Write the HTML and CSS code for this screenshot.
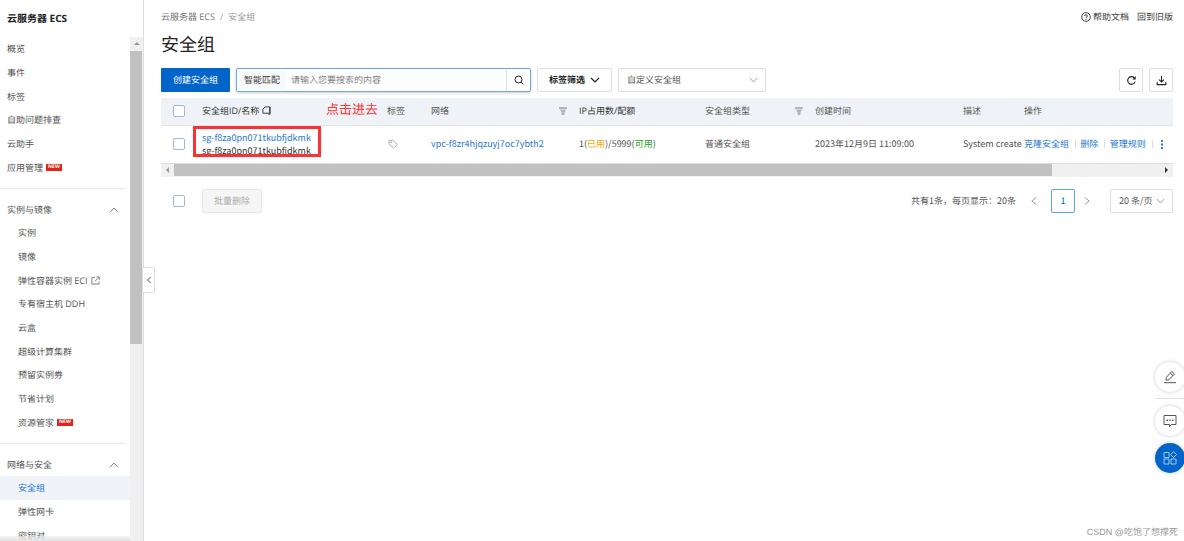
FILE: index.html
```html
<!DOCTYPE html>
<html lang="zh-CN">
<head>
<meta charset="utf-8">
<title>云服务器 ECS - 安全组</title>
<link rel="stylesheet" href="styles.css">
</head>
<body>
<div class="app">
  <aside class="sidebar">
    <h2 class="product">云服务器 ECS</h2>
    <div class="nav-wrap">
      <nav class="nav">
        <ul class="list list-top">
          <li><a href="#">概览</a></li>
          <li><a href="#">事件</a></li>
          <li><a href="#">标签</a></li>
          <li><a href="#">自助问题排查</a></li>
          <li><a href="#">云助手</a></li>
          <li><a href="#">应用管理<span class="new">NEW</span></a></li>
        </ul>
        <button class="group" type="button">实例与镜像<svg class="caret" viewBox="0 0 10 6"><path d="M1 5.2 5 1l4 4.2"/></svg></button>
        <ul class="list list-sub list-instances">
          <li><a href="#">实例</a></li>
          <li><a href="#">镜像</a></li>
          <li><a href="#">弹性容器实例 ECI<svg class="ext" viewBox="0 0 10 10"><path d="M4.500 1.500H1v7.500h8V6M6 1h3.200v3.200M9 1.200 4.500 5.700"/></svg></a></li>
          <li><a href="#">专有宿主机 DDH</a></li>
          <li><a href="#">云盒</a></li>
          <li><a href="#">超级计算集群</a></li>
          <li><a href="#">预留实例券</a></li>
          <li><a href="#">节省计划</a></li>
          <li><a href="#">资源管家<span class="new">NEW</span></a></li>
        </ul>
        <button class="group" type="button">网络与安全<svg class="caret" viewBox="0 0 10 6"><path d="M1 5.2 5 1l4 4.2"/></svg></button>
        <ul class="list list-sub">
          <li class="active"><a href="#">安全组</a></li>
          <li><a href="#">弹性网卡</a></li>
          <li><a href="#">密钥对</a></li>
        </ul>
      </nav>
      <div class="vbar"><span class="up"></span><span class="vthumb"></span></div>
    </div>
    <button class="collapse" type="button" aria-label="收起"><svg viewBox="0 0 6 10"><path d="M4.500 2 1.500 5l3 3"/></svg></button>
  </aside>

  <main class="main">
    <div class="top">
      <div class="crumbs"><a href="#">云服务器 ECS</a><span>/</span><span>安全组</span></div>
      <div class="help">
        <a href="#"><svg viewBox="0 0 10 10"><circle cx="5" cy="5" r="4.300"/><path d="M3.600 4c0-1.800 2.800-1.800 2.800 0C6.400 5 5 4.900 5 6M5 6.900v.9"/></svg>帮助文档</a>
        <a href="#">回到旧版</a>
      </div>
    </div>
    <h1 class="title">安全组</h1>

    <div class="toolbar">
      <button class="primary" type="button">创建安全组</button>
      <div class="search">
        <button class="match" type="button">智能匹配</button>
        <input type="text" aria-label="搜索" placeholder="请输入您要搜索的内容">
        <button class="go" type="button" aria-label="搜索"><svg viewBox="0 0 10 10"><circle cx="4.500" cy="4.500" r="3.500"/><path d="M7 7l2.300 2.300"/></svg></button>
      </div>
      <button class="box tagfilter" type="button">标签筛选<svg viewBox="0 0 10 6"><path d="M1 1l4 4 4-4"/></svg></button>
      <div class="select kind">
        <select aria-label="安全组类型"><option>自定义安全组</option></select>
        <svg viewBox="0 0 10 6"><path d="M1 .8 5 5.200 9 .8"/></svg>
      </div>
      <div class="tools">
        <button class="box icon" type="button" aria-label="刷新"><svg viewBox="0 0 12 12"><path d="M10 7.300A4.200 4.200 0 1 1 9.500 3.600"/><path class="solid" d="M10.600 1.200v3.600H7z"/></svg></button>
        <button class="box icon" type="button" aria-label="下载"><svg viewBox="0 0 12 12"><path d="M6 1v6.500M3.300 5 6 7.700 8.700 5M1.300 7.500v3h9.400v-3"/></svg></button>
      </div>
    </div>

    <div class="table-wrap">
      <table class="table">
        <colgroup><col class="c-check"><col class="c-id"><col class="c-tag"><col class="c-net"><col class="c-ip"><col class="c-type"><col class="c-time"><col class="c-desc"><col class="c-ops"></colgroup>
        <thead>
          <tr>
            <th class="check"><input type="checkbox" aria-label="全选"></th>
            <th><span class="dark">安全组ID/名称</span><svg class="copy" viewBox="0 0 10 10"><path d="M3.500 1H8.500v7H1V3.500z"/><path d="M9 1v8.200H7"/></svg></th>
            <th>标签</th>
            <th><div class="head">网络<svg class="funnel" viewBox="0 0 8 8"><path d="M0 0h8v2H0zM1 2.500h6L5.800 5H2.200zM2.500 5h3v3h-3z"/></svg></div></th>
            <th><span class="dark">IP占用数/配额</span></th>
            <th><div class="head">安全组类型<svg class="funnel" viewBox="0 0 8 8"><path d="M0 0h8v2H0zM1 2.500h6L5.800 5H2.200zM2.500 5h3v3h-3z"/></svg></div></th>
            <th>创建时间</th>
            <th>描述</th>
            <th>操作</th>
          </tr>
        </thead>
        <tbody>
          <tr>
            <td class="check"><input type="checkbox" aria-label="选择 sg-f8za0pn071tkubfjdkmk"></td>
            <td class="id-cell"><div class="ident"><a href="#">sg-f8za0pn071tkubfjdkmk</a><span>sg-f8za0pn071tkubfjdkmk</span></div></td>
            <td><svg class="tag" viewBox="0 0 10 10"><path d="M1 1.200h3.800L9.300 5.500 5.600 9.200 1 4.700z"/><circle cx="3.200" cy="3.300" r=".6"/></svg></td>
            <td><a href="#">vpc-f8zr4hjqzuyj7oc7ybth2</a></td>
            <td>1(<span class="used">已用</span>)/5999(<span class="free">可用</span>)</td>
            <td>普通安全组</td>
            <td>2023年12月9日 11:09:00</td>
            <td class="desc">System create</td>
            <td><div class="ops"><a href="#">克隆安全组</a><i></i><a href="#">删除</a><i></i><a href="#">管理规则</a><i></i><button type="button" aria-label="更多"><svg viewBox="0 0 2 10"><path d="M0 0h2v2H0zM0 4h2v2H0zM0 8h2v2H0z"/></svg></button></div></td>
          </tr>
        </tbody>
      </table>
      <div class="hbar"><span class="left"></span><span class="hthumb"></span><span class="right"></span></div>
      <div class="mark-box"></div>
      <div class="mark-text">点击进去</div>
    </div>

    <div class="footer">
      <input type="checkbox" aria-label="全选本页">
      <button class="bulk" type="button" disabled>批量删除</button>
      <div class="pager">
        <span>共有1条，每页显示：20条</span>
        <button class="step" type="button" aria-label="上一页"><svg viewBox="0 0 6 10"><path d="M5.200 1.500.8 5l4.400 3.500"/></svg></button>
        <button class="page" type="button">1</button>
        <button class="step" type="button" aria-label="下一页"><svg viewBox="0 0 6 10"><path d="M.8 1.500 5.200 5 .8 8.500"/></svg></button>
        <div class="select size">
          <select aria-label="每页条数"><option>20 条/页</option></select>
          <svg viewBox="0 0 10 6"><path d="M1 .8 5 5.200 9 .8"/></svg>
        </div>
      </div>
    </div>
  </main>

  <div class="float">
    <button type="button" aria-label="反馈"><svg viewBox="0 0 14 14"><path d="M1 12.700h12M3 10.200l.4-2.900L8.800 1.500l2.700 2.400-5.600 5.900zM7.300 3.100 10 5.600"/></svg></button>
    <span class="rule"></span>
    <button type="button" aria-label="咨询"><svg viewBox="0 0 14 14"><path d="M1 1.500h12v9H8.500L6.500 12.500v-2H1z"/><path class="dots" d="M3.500 5.500h1.400v1.400H3.500zM6.300 5.500h1.400v1.400H6.300zM9.100 5.500h1.400v1.400H9.100z"/></svg></button>
    <button class="blue" type="button" aria-label="应用"><svg viewBox="0 0 14 14"><path d="M1 1.500h5v5H1zM1 8h5v5H1zM8 8h5v5H8zM10.500.6l3 3-3 3-3-3z"/></svg></button>
  </div>
  <div class="watermark">CSDN @吃饱了想撑死</div>
</div>
</body>
</html>
```
FILE: styles.css
```css
* { box-sizing: border-box; }
body {
  margin: 0;
  font: 9px/14px "Open Sans", "Noto Sans CJK SC", sans-serif;
  text-rendering: geometricPrecision;
  color: #555;
  background: #fff;
}
a { color: #1f78d1; text-decoration: none; }
button, input, select { font: inherit; color: inherit; margin: 0; text-rendering: inherit; }
button { padding: 0; border: 0; background: none; }
svg { fill: none; stroke: currentColor; flex: none; }
ul { list-style: none; margin: 0; padding: 0; }

.app { position: relative; display: flex; height: 100vh; overflow: hidden; }

.sidebar {
  position: relative;
  display: flex;
  flex-direction: column;
  flex: none;
  width: 144px;
  border-right: 1px solid #dcdfe2;
}
.product { margin: 0; padding: 11px 7px 12px; font-size: 10px; line-height: 14px; color: #222; }
.nav-wrap { position: relative; display: flex; flex: 1; min-height: 0; }
.nav-wrap::after {
  content: "";
  position: absolute;
  left: 0; right: 13px; bottom: 0;
  height: 5px;
  background: linear-gradient(#eeeeee99, #e2e2e2);
}
.nav { flex: 1; overflow: hidden; }
.list { display: grid; grid-auto-rows: 1fr; height: 71px; }
.list-top { height: 142px; }
.list-instances { height: 213px; }
.list a { display: flex; align-items: center; height: 100%; padding: 1px 0 0 7px; color: #555; }
.list-sub a { padding-left: 18px; }
.list .active { background: #eff3f8; }
.list .active a { color: #1f78d1; }
.new {
  margin-left: 3px;
  padding: 0 2px;
  background: #e1251b;
  color: #fff;
  font-size: 5px;
  line-height: 7px;
  font-weight: bold;
}
.ext { width: 9px; height: 9px; margin-left: 3px; stroke: #777; }
.group {
  display: flex;
  align-items: center;
  justify-content: space-between;
  position: relative;
  width: 100%;
  height: 42px;
  padding: 19px 11px 0 7px;
}
.group::before {
  content: "";
  position: absolute;
  left: 0; right: 5px; top: 9px;
  height: 1px;
  background: #e6e8eb;
}
.caret { width: 10px; height: 6px; stroke: #888; }
.vbar { display: flex; flex-direction: column; width: 13px; background: #f0f0f0; }
.up { height: 14px; }
.up::before {
  content: "";
  display: block;
  width: 0;
  margin: 5px auto 0;
  border: 3px solid transparent;
  border-top: 0;
  border-bottom-color: #999;
}
.vthumb { height: 60%; margin-right: 1px; background: #c1c1c1; max-height: 293px; }
.collapse {
  position: absolute;
  left: 142px; top: 267px;
  display: grid;
  place-items: center;
  width: 13px; height: 26px;
  border: 1px solid #dbe0e8;
  border-radius: 0 2px 2px 0;
  background: #fff;
}
.collapse svg { width: 6px; height: 10px; stroke: #3c4c6b; }

.main { flex: 1; min-width: 0; padding: 10px 11px 0 17px; }
.top { display: flex; justify-content: space-between; }
.crumbs { display: flex; gap: 5px; color: #999; }
.crumbs a { color: #777; }
.help { display: flex; gap: 8px; }
.help a { display: flex; align-items: center; gap: 2px; color: #444; }
.help svg { width: 10px; height: 10px; }
.title { margin: 9px 0 11px; font-size: 18px; line-height: 24px; font-weight: normal; color: #222; }

.toolbar { display: flex; gap: 6px; height: 24px; }
.primary { width: 69px; background: #0064c8; color: #fff; border-radius: 1px; }
.search {
  display: flex;
  width: 295px;
  border: 1px solid #6aa9e6;
  border-radius: 2px;
  box-shadow: 0 1px 3px #0003;
}
.match { margin: 2px 0 2px 2px; padding: 0 5px; background: #f7f9fa; color: #444; }
.search input { flex: 1; min-width: 0; padding: 0 6px; border: 0; outline: 0; background: none; }
.search input::placeholder { color: #808080; }
.go { display: grid; place-items: center; width: 24px; border-left: 1px solid #dde2e8; color: #222; }
.go svg { width: 10px; height: 10px; }
.box { border: 1px solid #dcdfe3; border-radius: 2px; color: #222; background: #fff; }
.tagfilter { display: flex; align-items: center; justify-content: center; gap: 5px; width: 75px; font-weight: bold; }
.tagfilter svg { width: 10px; height: 6px; stroke-width: 1.2; }
.select { position: relative; height: 24px; }
.select select {
  appearance: none;
  width: 100%; height: 100%;
  padding: 0 8px;
  border: 1px solid #dcdfe3;
  border-radius: 2px;
  background: #fff;
}
.select svg { position: absolute; right: 8px; top: 9px; width: 9px; height: 6px; stroke: #999; pointer-events: none; }
.kind { width: 148px; }
.tools { display: flex; gap: 6px; margin-left: auto; }
.icon { display: grid; place-items: center; width: 24px; }
.icon svg { width: 11px; height: 11px; stroke-width: 1.2; }
.icon .solid { fill: currentColor; stroke: none; }

.table-wrap { position: relative; margin-top: 6px; }
.table { width: 100%; table-layout: fixed; border-collapse: collapse; }
.table tbody, .pager { font-family: "Noto Sans CJK SC", sans-serif; }
.c-check { width: 33px; }
.c-id { width: 185px; }
.c-tag { width: 44px; }
.c-net { width: 148px; }
.c-ip { width: 126px; }
.c-type { width: 110px; }
.c-time { width: 148px; }
.c-desc { width: 63px; }
th, td { padding: 0 8px; text-align: left; white-space: nowrap; vertical-align: middle; }
th { height: 27px; background: #eff3f8; border-bottom: 1px solid #e3e6ea; font-weight: normal; }
td { height: 38px; border-bottom: 1px solid #dedede; }
td:last-child, th:last-child { padding: 0 6px; }
.check { padding: 0 12px; line-height: 0; }
input[type="checkbox"] {
  appearance: none;
  flex: none;
  width: 12px; height: 12px;
  border: 1px solid #a3b8d0;
  border-radius: 2px;
  background: #fff;
}
.dark { color: #333; }
.copy { width: 9px; height: 9px; margin-left: 3px; vertical-align: -1px; color: #333; }
.head { display: flex; align-items: center; justify-content: space-between; margin-right: -4px; }
.funnel { width: 8px; height: 8px; fill: #b3b6ba; stroke: none; }
.id-cell { padding-bottom: 1px; }
.ident { display: flex; flex-direction: column; line-height: 13px; color: #333; }
.tag { display: block; width: 10px; height: 10px; margin-left: 1px; stroke: #aaa; }
.used { color: #f0a800; }
.free { color: #1e9e1e; }
.desc { padding-right: 0; }
.ops { display: flex; align-items: center; }
.ops i { width: 1px; height: 8px; margin: 0 5px 0 6px; background: #dddde6; }
.ops button { padding: 3px 4px; color: #0064c8; }
.ops svg { display: block; width: 2px; height: 9px; fill: currentColor; stroke: none; }
.hbar { display: flex; align-items: center; height: 13px; background: #f0f0f0; }
.hthumb { width: 878px; flex-shrink: 1; height: 12px; background: #c1c1c1; }
.left, .right { border: 3px solid transparent; }
.left { margin-right: 5px; margin-left: 2px; border-right-color: #999; }
.right { margin: 0 2px 0 auto; border-left-color: #333; }
.mark-box { position: absolute; left: 32px; top: 28px; width: 128px; height: 31px; border: 3px solid #fb3232; }
.mark-text { position: absolute; left: 165px; top: 1px; font-size: 13px; line-height: 20px; color: #fb3232; }

.footer { display: flex; align-items: center; margin-top: 12px; padding-left: 12px; }
.bulk { width: 60px; height: 24px; margin-left: 17px; border: 1px solid #e6e6e6; border-radius: 2px; background: #f6f6f6; color: #aaa; }
.pager { display: flex; align-items: center; margin-left: auto; }
.step { display: grid; place-items: center; width: 24px; color: #999; }
.pager > span { margin-right: 6px; }
.step svg { width: 6px; height: 10px; }
.page { width: 24px; height: 24px; margin-left: 5px; border: 1px solid #5ea3e6; border-radius: 2px; color: #0064c8; }
.size { width: 63px; margin-left: 11px; }

.float { position: absolute; right: -1px; top: 362px; display: flex; flex-direction: column; align-items: center; }
.float button { display: grid; place-items: center; width: 30px; height: 30px; border-radius: 50%; background: #fff; color: #555; box-shadow: 0 0 4px #0003; }
.float svg { width: 14px; height: 14px; }
.float .rule { width: 30px; height: 1px; margin: 6px 0 7px; background: #dbe0e6; }
.float .blue { margin-top: 7px; background: #0064c8; color: #9cc8f5; }
.float .dots { fill: currentColor; stroke: none; }
.watermark { position: absolute; right: 6px; bottom: 2px; font: 9px/14px "Liberation Sans", "Noto Sans CJK SC", sans-serif; color: #999; }
```
